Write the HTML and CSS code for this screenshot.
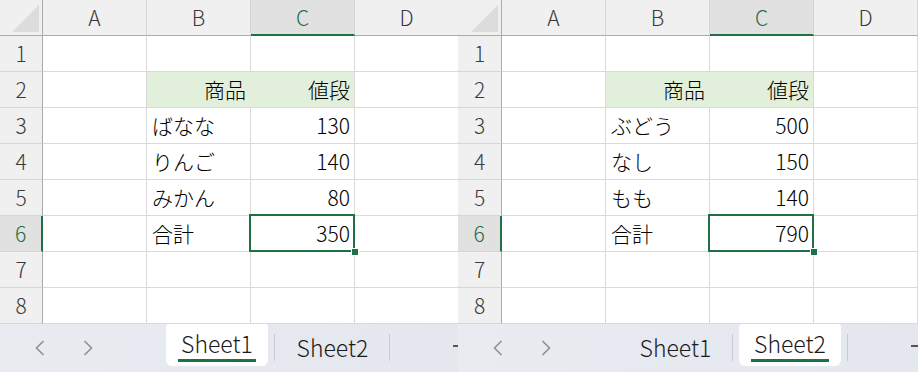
FILE: index.html
```html
<!DOCTYPE html>
<html lang="ja">
<head>
<meta charset="utf-8">
<link rel="stylesheet" href="styles.css">
</head>
<body>
<div class="pane left">
  <div class="sheet">
    <div class="hd corner"><svg class="tri" width="27" height="27" viewBox="0 0 27 27"><polygon points="27,0 27,27 0,27" fill="#dcdcdc"/></svg></div>
    <div class="hd">A</div><div class="hd">B</div><div class="hd sel">C</div><div class="hd">D</div>

    <div class="rh">1</div><div class="c"></div><div class="c"></div><div class="c"></div><div class="c"></div>
    <div class="rh">2</div><div class="c"></div><div class="c fill num">商品</div><div class="c fill num">値段</div><div class="c"></div>
    <div class="rh">3</div><div class="c"></div><div class="c">ばなな</div><div class="c num">130</div><div class="c"></div>
    <div class="rh">4</div><div class="c"></div><div class="c">りんご</div><div class="c num">140</div><div class="c"></div>
    <div class="rh">5</div><div class="c"></div><div class="c">みかん</div><div class="c num">80</div><div class="c"></div>
    <div class="rh sel">6</div><div class="c"></div><div class="c">合計</div><div class="c num active">350<span class="handle"></span></div><div class="c"></div>
    <div class="rh">7</div><div class="c"></div><div class="c"></div><div class="c"></div><div class="c"></div>
    <div class="rh">8</div><div class="c"></div><div class="c"></div><div class="c"></div><div class="c"></div>
  </div>
  <div class="tabs">
    <div class="nav">
      <span class="arrow"><svg width="10" height="16" viewBox="0 0 10 16"><polyline points="8.5,1 1.5,8 8.5,15" fill="none" stroke="#8f8f8f" stroke-width="1.6"/></svg></span>
      <span class="arrow"><svg width="10" height="16" viewBox="0 0 10 16"><polyline points="1.5,1 8.5,8 1.5,15" fill="none" stroke="#8f8f8f" stroke-width="1.6"/></svg></span>
    </div>
    <div class="slot on"><div class="tabbox"><span class="label">Sheet1</span><span class="uline"></span></div></div>
    <div class="slot"><span class="label">Sheet2</span></div>
    <div class="plus"></div>
  </div>
</div>

<div class="pane right">
  <div class="sheet">
    <div class="hd corner"><svg class="tri" width="27" height="27" viewBox="0 0 27 27"><polygon points="27,0 27,27 0,27" fill="#dcdcdc"/></svg></div>
    <div class="hd">A</div><div class="hd">B</div><div class="hd sel">C</div><div class="hd">D</div>

    <div class="rh">1</div><div class="c"></div><div class="c"></div><div class="c"></div><div class="c"></div>
    <div class="rh">2</div><div class="c"></div><div class="c fill num">商品</div><div class="c fill num">値段</div><div class="c"></div>
    <div class="rh">3</div><div class="c"></div><div class="c">ぶどう</div><div class="c num">500</div><div class="c"></div>
    <div class="rh">4</div><div class="c"></div><div class="c">なし</div><div class="c num">150</div><div class="c"></div>
    <div class="rh">5</div><div class="c"></div><div class="c">もも</div><div class="c num">140</div><div class="c"></div>
    <div class="rh sel">6</div><div class="c"></div><div class="c">合計</div><div class="c num active">790<span class="handle"></span></div><div class="c"></div>
    <div class="rh">7</div><div class="c"></div><div class="c"></div><div class="c"></div><div class="c"></div>
    <div class="rh">8</div><div class="c"></div><div class="c"></div><div class="c"></div><div class="c"></div>
  </div>
  <div class="tabs">
    <div class="nav">
      <span class="arrow"><svg width="10" height="16" viewBox="0 0 10 16"><polyline points="8.5,1 1.5,8 8.5,15" fill="none" stroke="#8f8f8f" stroke-width="1.6"/></svg></span>
      <span class="arrow"><svg width="10" height="16" viewBox="0 0 10 16"><polyline points="1.5,1 8.5,8 1.5,15" fill="none" stroke="#8f8f8f" stroke-width="1.6"/></svg></span>
    </div>
    <div class="slot"><span class="label">Sheet1</span></div>
    <div class="slot on"><div class="tabbox"><span class="label">Sheet2</span><span class="uline"></span></div></div>
    <div class="plus"></div>
  </div>
</div>
</body>
</html>
```
FILE: styles.css
```css
* { box-sizing: border-box; }
html, body { margin: 0; padding: 0; }
body {
  width: 918px;
  height: 372px;
  overflow: hidden;
  display: flex;
  background: #fff;
  font-family: "Noto Sans CJK JP", "Noto Sans", sans-serif;
  font-weight: 300;
}
.pane {
  width: 458px;
  height: 372px;
  flex-shrink: 0;
  overflow: hidden;
  display: flex;
  flex-direction: column;
}
.pane.right { width: 460px; }

.sheet {
  display: grid;
  grid-template-columns: 43px repeat(4, 104px);
  grid-auto-rows: 36px;
  height: 324px;
  flex-shrink: 0;
}
.right .sheet { grid-template-columns: 44px repeat(4, 104px); }

.c {
  position: relative;
  border-right: 1px solid #dadada;
  border-bottom: 1px solid #dadada;
  padding: 0 5px;
  font-size: 21px;
  line-height: 35px;
  color: #000;
  white-space: nowrap;
}
.num { text-align: right; padding-right: 4px; }
.fill { background: #e2efda; border-right-color: #e2efda; }
.fill + .fill { border-right-color: #dadada; }

.hd {
  background: #f0f0f0;
  color: #3a3a3a;
  text-align: center;
  font-size: 21px;
  line-height: 35px;
  border-right: 1px solid #d6d6d6;
  border-bottom: 1px solid #ababab;
}
.hd.corner {
  border-right: 1px solid #ababab;
  display: flex;
  justify-content: flex-end;
  align-items: flex-end;
  padding: 0 3px 3px 0;
}
.tri { display: block; }
.hd.sel {
  background: #e1e1e1;
  color: #1d6b40;
  border-bottom: 2px solid #1e7145;
  line-height: 34px;
}
.rh {
  background: #f0f0f0;
  color: #3a3a3a;
  text-align: center;
  font-size: 21px;
  line-height: 35px;
  border-right: 1px solid #ababab;
  border-bottom: 1px solid #d6d6d6;
}
.rh.sel {
  background: #e1e1e1;
  color: #1d6b40;
  border-right: 2px solid #1e7145;
}

.active::after {
  content: "";
  position: absolute;
  left: -2px;
  top: -2px;
  right: -1px;
  bottom: -1px;
  border: 2px solid #1e7145;
  pointer-events: none;
}
.handle {
  position: absolute;
  right: -5px;
  bottom: -5px;
  width: 8px;
  height: 8px;
  background: #1e7145;
  border: 1px solid #fff;
  z-index: 2;
}

.tabs {
  height: 48px;
  flex-shrink: 0;
  display: flex;
  background: linear-gradient(90deg, #e8ebf0, #e4e7ee);
}
.nav {
  width: 160px;
  flex-shrink: 0;
  display: flex;
  padding-left: 16px;
}
.arrow {
  width: 48px;
  display: flex;
  align-items: center;
  justify-content: center;
}
.arrow svg { display: block; }
.slot {
  position: relative;
  width: 115px;
  flex-shrink: 0;
  display: flex;
  justify-content: center;
  font-size: 23px;
  font-weight: 300;
  color: #1a1a1a;
}
.slot::after {
  content: "";
  position: absolute;
  right: 0;
  top: 10px;
  width: 1px;
  height: 27px;
  background: #c8cacf;
}
.slot > .label {
  line-height: 46px;
}
.tabbox {
  flex: 1;
  margin: 0 7px 6px 6px;
  background: #fff;
  border-radius: 3px 3px 6px 6px;
  display: flex;
  flex-direction: column;
  align-items: center;
}
.tabbox .label {
  line-height: 34px;
  padding-top: 2px;
}
.uline {
  width: 78px;
  height: 3px;
  margin-top: -1px;
  background: #1e7145;
}
.plus {
  flex-shrink: 0;
  width: 14px;
  height: 2px;
  margin-left: 63px;
  margin-top: 21px;
  background: #555;
}
```
